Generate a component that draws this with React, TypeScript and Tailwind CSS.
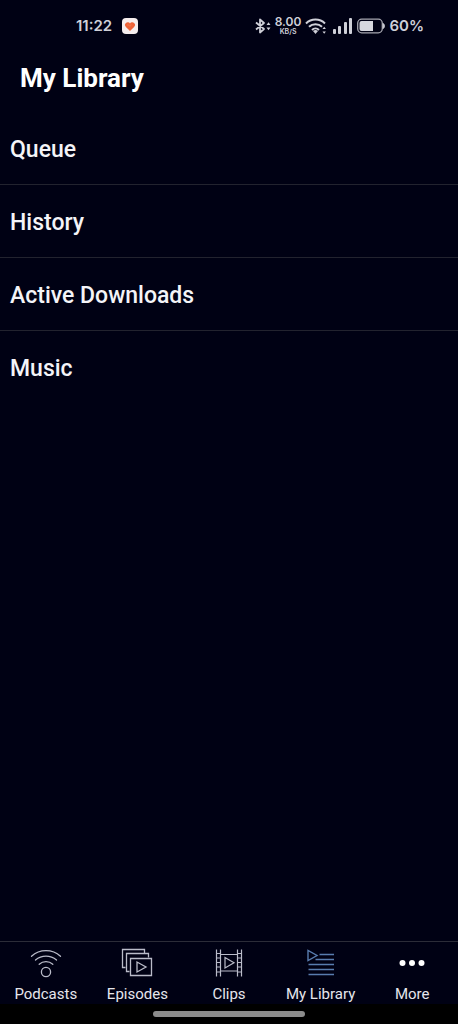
import type { ReactNode } from "react";

const sections = ["Queue", "History", "Active Downloads", "Music"];

function HeartBadge() {
  return (
    <svg width="16" height="16" viewBox="0 0 16 16" aria-hidden="true">
      <rect width="16" height="16" rx="4" fill="#f6eeee" />
      <path d="M8 13 3.9 8.9a2.6 2.6 0 0 1 0-3.8A2.7 2.7 0 0 1 8 5.5a2.7 2.7 0 0 1 4.1-.4 2.6 2.6 0 0 1 0 3.8Z" fill="#ee6338" />
      <path d="M5 7h2l1 1.5L9 6.5l1 1" fill="none" stroke="#f4835a" strokeWidth="0.6" />
    </svg>
  );
}

function BluetoothIcon() {
  return (
    <svg width="16" height="16" viewBox="0 0 16 16" fill="none" stroke="#cfd0d8" strokeWidth="1.8" aria-hidden="true">
      <path d="M1 4.5 9 11 5 14.5v-13L9 5 1 11.5" strokeLinejoin="round" />
      <path d="m11.5 7 2-2.7 2 2.7Zm0 2.5 2 2.7 2-2.7Z" fill="#cfd0d8" stroke="none" />
    </svg>
  );
}

function WifiIcon() {
  return (
    <svg width="22" height="18" viewBox="0 0 22 18" fill="none" stroke="#cfd0d8" strokeWidth="2" aria-hidden="true">
      <path d="M1 6.5a13.5 13.5 0 0 1 19 0M4 9.8a9.3 9.3 0 0 1 13 0M7 13a5 5 0 0 1 7 0" />
      <path d="m8 14 2.5 3 2.5-3a4 4 0 0 0-5 0Z" fill="#cfd0d8" stroke="none" />
      <path d="m17.5 12 1.7-2.2 1.7 2.2Zm0 2.5 1.7 2.2 1.7-2.2Z" fill="#cfd0d8" stroke="none" />
    </svg>
  );
}

function SignalIcon() {
  return (
    <svg width="20" height="16" viewBox="0 0 20 16" fill="#cfd0d8" aria-hidden="true">
      <rect x="0" y="11" width="3" height="5" rx="1" />
      <rect x="5" y="8" width="3" height="8" rx="1" />
      <rect x="11" y="4" width="3" height="12" rx="1" />
      <rect x="16" y="0" width="3" height="16" rx="1" />
    </svg>
  );
}

function BatteryIcon() {
  return (
    <svg width="28" height="16" viewBox="0 0 28 16" aria-hidden="true">
      <rect x="0.7" y="1.2" width="24.6" height="13.6" rx="4" fill="none" stroke="#a6a7b0" strokeWidth="1.3" />
      <path d="M4.5 3H16v10H4.5A2 2 0 0 1 2.5 11V5a2 2 0 0 1 2-2Z" fill="#d6d7de" />
      <path d="M26.2 5.5c1.5.5 1.5 4.5 0 5Z" fill="#cfd0d8" stroke="#cfd0d8" />
    </svg>
  );
}

function PodcastsIcon() {
  return (
    <svg width="32" height="30" viewBox="0 0 32 30" fill="none" stroke="#babcc9" strokeWidth="1.3" strokeLinecap="round" aria-hidden="true">
      <circle cx="16" cy="24" r="4.6" />
      <path d="M1.5 8.3a21.5 21.5 0 0 1 29 0M5.5 12a16 16 0 0 1 21 0M9.2 16.2a10.3 10.3 0 0 1 13.6 0" />
    </svg>
  );
}

function EpisodesIcon() {
  return (
    <svg width="32" height="30" viewBox="0 0 32 30" fill="none" stroke="#babcc9" strokeWidth="1.3" aria-hidden="true">
      <path d="M4.5 19.5h-3v-18h22v4" />
      <path d="M8.5 23.5h-3v-18h22v4" />
      <path d="M9.5 10.5h21v17h-21Z" />
      <path d="M16 14v10l9-5Z" />
    </svg>
  );
}

function ClipsIcon() {
  return (
    <svg width="28" height="30" viewBox="0 0 28 30" fill="none" stroke="#babcc9" strokeWidth="1.2" aria-hidden="true">
      <path d="M1.5 1.5v27M5.5 1.5v27M22.5 1.5v27M26.5 1.5v27" />
      <path d="M1.5 5.5h4M1.5 10h4M1.5 14.5h4M1.5 19h4M1.5 24h4M22.5 5.5h4M22.5 10h4M22.5 14.5h4M22.5 19h4M22.5 24h4" />
      <path d="M5.5 6.5h17M5.5 23h17" />
      <path d="M10 9.5v10.5l9-5.2Z" />
    </svg>
  );
}

function LibraryIcon() {
  return (
    <svg width="28" height="30" viewBox="0 0 28 30" fill="none" stroke="#587cae" strokeWidth="1.4" aria-hidden="true">
      <path d="M1 2.5v10L10 7.5Z" />
      <path d="M12.5 6.5H27M8.5 11.5H27M1.5 16.5H27M1.5 21.5H27M1.5 26.5H27" />
    </svg>
  );
}

function MoreIcon() {
  return (
    <svg width="28" height="30" viewBox="0 0 28 30" fill="#ffffff" aria-hidden="true">
      <circle cx="4.5" cy="15" r="3" />
      <circle cx="14" cy="15" r="3" />
      <circle cx="23.5" cy="15" r="3" />
    </svg>
  );
}

const tabs: { label: string; icon: ReactNode }[] = [
  { label: "Podcasts", icon: <PodcastsIcon /> },
  { label: "Episodes", icon: <EpisodesIcon /> },
  { label: "Clips", icon: <ClipsIcon /> },
  { label: "My Library", icon: <LibraryIcon /> },
  { label: "More", icon: <MoreIcon /> },
];

function StatusBar() {
  return (
    <div className="flex h-13 items-center justify-between pr-[34px] pl-19 font-[Inter,sans-serif] text-[15px] font-semibold text-[#cfd0d8]">
      <div className="flex items-center gap-2.5">
        <span>11:22</span>
        <HeartBadge />
      </div>
      <div className="flex items-center gap-1">
        <div className="flex items-center gap-1 pr-0.5">
          <BluetoothIcon />
          <div className="flex flex-col items-center">
            <span className="text-xs leading-3">8.00</span>
            <span className="text-[7px] leading-2">KB/S</span>
          </div>
          <WifiIcon />
        </div>
        <SignalIcon />
        <BatteryIcon />
        <span>60%</span>
      </div>
    </div>
  );
}

function App() {
  return (
    <div className="flex min-h-screen flex-col bg-[#000114] font-[Roboto,sans-serif] text-white">
      <StatusBar />
      <header className="flex h-15 items-start px-5 pt-2">
        <h1 className="text-[26px] leading-9 font-bold">My Library</h1>
      </header>
      <main className="flex-1">
        <ul className="divide-y divide-[#22232f]">
          {sections.map((section) => (
            <li key={section}>
              <button type="button" className="flex h-18 w-full items-center px-2.5 pt-1 text-left text-[23px] font-medium text-[#f4f4f8]">
                {section}
              </button>
            </li>
          ))}
        </ul>
      </main>
      <nav className="grid grid-cols-5 border-t border-[#2b2c38]">
        {tabs.map((tab) => (
          <button key={tab.label} type="button" className="flex flex-col items-center gap-1.5 pt-1.5 text-[15px] leading-5 whitespace-nowrap text-[#e6e6ec]">
            {tab.icon}
            {tab.label}
          </button>
        ))}
      </nav>
      <div className="flex h-5 items-center justify-center bg-black">
        <div className="h-1.5 w-1/3 rounded-full bg-[#8c8c8c]" />
      </div>
    </div>
  );
}

export default App;
